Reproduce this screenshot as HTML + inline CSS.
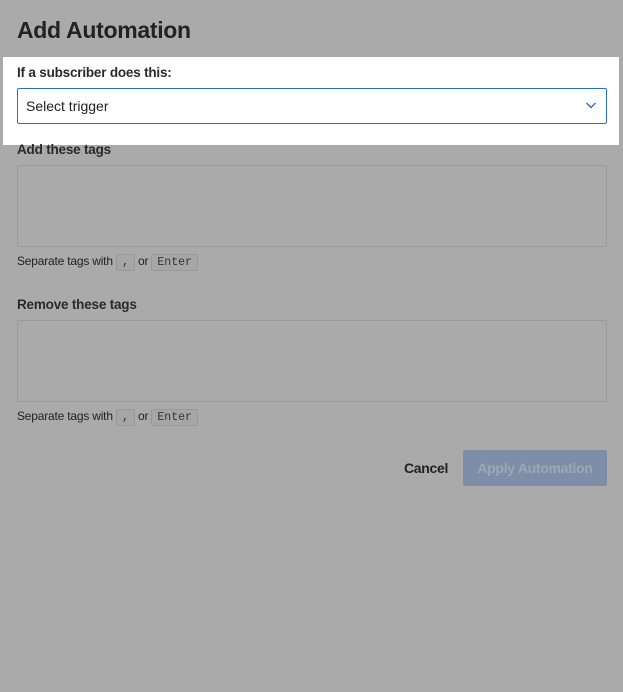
<!DOCTYPE html>
<html><head><style>
*{box-sizing:border-box;margin:0;padding:0}
body{width:623px;height:692px;background:#aaaaaa;font-family:"Liberation Sans",sans-serif;color:#222;position:relative;overflow:hidden}
.a{position:absolute}
h1{position:absolute;left:17px;top:17px;font-size:23px;font-weight:bold;color:#222;letter-spacing:-0.3px}
.lbl{font-size:13.5px;font-weight:bold;color:#2a2a2a;letter-spacing:-0.2px}
.box{border:1px solid #999;border-radius:2px;background:#aaa}
.hint{font-size:12px;color:#222;letter-spacing:-0.2px}
kbd{font-family:"Liberation Mono",monospace;font-size:11.5px;background:#a6a6a6;border:1px solid #999;border-radius:2px;padding:1px 5px;color:#333;letter-spacing:0}
</style></head><body>
<h1>Add Automation</h1>
<div class="a" style="left:3px;top:57px;width:616px;height:88px;background:#fff"></div>
<div class="a lbl" style="left:17px;top:65px">If a subscriber does this:</div>
<div class="a" style="left:17px;top:88px;width:590px;height:36px;border:1px solid #2b6cd4;border-radius:2px;background:#fff"></div>
<div class="a" style="left:26px;top:98px;font-size:14px;color:#222">Select trigger</div>
<svg class="a" style="left:585px;top:100px" width="12" height="10" viewBox="0 0 12 10"><path d="M1.5 3 L6 7.5 L10.5 3" fill="none" stroke="#2b6cd4" stroke-width="1.4"/></svg>
<div class="a lbl" style="left:17px;top:142px">Add these tags</div>
<div class="a box" style="left:17px;top:165px;width:590px;height:82px"></div>
<div class="a hint" style="left:17px;top:254px">Separate tags with <kbd>,</kbd> or <kbd>Enter</kbd></div>
<div class="a lbl" style="left:17px;top:297px">Remove these tags</div>
<div class="a box" style="left:17px;top:320px;width:590px;height:82px"></div>
<div class="a hint" style="left:17px;top:409px">Separate tags with <kbd>,</kbd> or <kbd>Enter</kbd></div>
<div class="a" style="left:404px;top:460px;font-size:14px;font-weight:bold;color:#222;letter-spacing:-0.3px">Cancel</div>
<div class="a" style="left:463px;top:450px;width:144px;height:36px;background:#7f8ea8;border-radius:2px;color:#9ea6b2;font-size:14px;font-weight:bold;text-align:center;line-height:36px;letter-spacing:-0.3px">Apply Automation</div>
</body></html>
